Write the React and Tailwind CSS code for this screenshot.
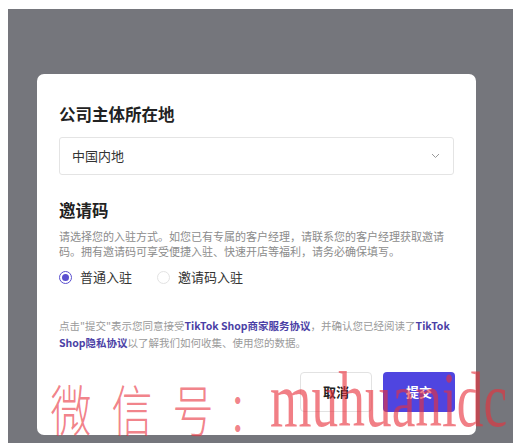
import React from "react";

const sans = { fontFamily: '"Noto Sans CJK SC", "Noto Sans", sans-serif' };

function Radio({ checked, label }) {
  return (
    <div className="flex items-center gap-[8px]">
      <span
        className={
          "flex h-[13px] w-[13px] items-center justify-center rounded-full border " +
          (checked ? "border-[#5a4fcf]" : "border-[#e3e3e3]")
        }
      >
        {checked && <span className="h-[7px] w-[7px] rounded-full bg-[#5a4fcf]" />}
      </span>
      <span className="text-[13px] leading-[20px] text-[#333]">{label}</span>
    </div>
  );
}

export default function App() {
  return (
    <div className="relative h-[447px] w-[525px] overflow-hidden bg-white" style={sans}>
      <div className="pl-[8px] pt-[9px]">
        <div className="h-[434px] w-[505px] bg-[#75767c] pl-[29px] pt-[65px]">
          <div className="flex h-[361px] w-[439px] flex-col rounded-[7px] bg-white px-[22px] pt-[28px]">
            <div className="text-[16.5px] font-semibold leading-[24px] text-[#222]">公司主体所在地</div>
            <div className="mt-[11px] flex h-[38px] items-center justify-between rounded-[3px] border border-[#e4e4e4] pl-[12px] pr-[13px]">
              <span className="text-[13px] text-[#333]">中国内地</span>
              <svg width="9" height="6" viewBox="0 0 9 6" fill="none">
                <path d="M1 1l3.5 3.5L8 1" stroke="#9a9a9a" strokeWidth="1" />
              </svg>
            </div>
            <div className="mt-[23px] text-[16.5px] font-semibold leading-[24px] text-[#222]">邀请码</div>
            <div className="mt-[7px] text-[11px] leading-[15px] text-[#8c8c8c]">
              请选择您的入驻方式。如您已有专属的客户经理，请联系您的客户经理获取邀请
              <br />
              码。拥有邀请码可享受便捷入驻、快速开店等福利，请务必确保填写。
            </div>
            <div className="mt-[8px] flex items-center gap-[25px]">
              <Radio checked label="普通入驻" />
              <Radio label="邀请码入驻" />
            </div>
            <div className="mt-[30px] text-[10.5px] leading-[17px] text-[#9a9a9a]">
              点击"提交"表示您同意接受
              <span className="font-semibold text-[#4b3fa6]">TikTok Shop商家服务协议</span>
              ，并确认您已经阅读了<span className="font-semibold text-[#4b3fa6]">TikTok</span>
              <br />
              <span className="font-semibold text-[#4b3fa6]">Shop隐私协议</span>
              以了解我们如何收集、使用您的数据。
            </div>
            <div className="mt-[21px] flex justify-end gap-[11px]">
              <button className="h-[40px] w-[72px] rounded-[4px] border border-[#e2e2e2] bg-white text-[13px] font-semibold text-[#222]">
                取消
              </button>
              <button className="-mr-[1px] h-[40px] w-[72px] rounded-[4px] bg-[#4f45e0] text-[13px] font-semibold text-white">
                提交
              </button>
            </div>
          </div>
        </div>
      </div>

      <div className="pointer-events-none absolute left-[40px] top-[377px] flex items-baseline text-[rgba(232,48,60,0.62)]">
        {["微", "信", "号", "："].map((c, i) => (
          <span
            key={i}
            className={"inline-block text-center text-[50px] font-extralight leading-[60px] " + (i === 3 ? "w-[44px]" : "w-[61px]")}
            style={{ fontFamily: '"Noto Sans CJK SC", sans-serif' }}
          >
            <span className="inline-block scale-y-[1.1] scale-x-[0.82]">{c}</span>
          </span>
        ))}
        <span
          className="ml-[3px] inline-block origin-bottom-left scale-x-[0.89] scale-y-[1.3] text-[60px] leading-[60px]"
          style={{ fontFamily: '"Liberation Serif", serif' }}
        >
          muhuanidc
        </span>
      </div>
    </div>
  );
}
